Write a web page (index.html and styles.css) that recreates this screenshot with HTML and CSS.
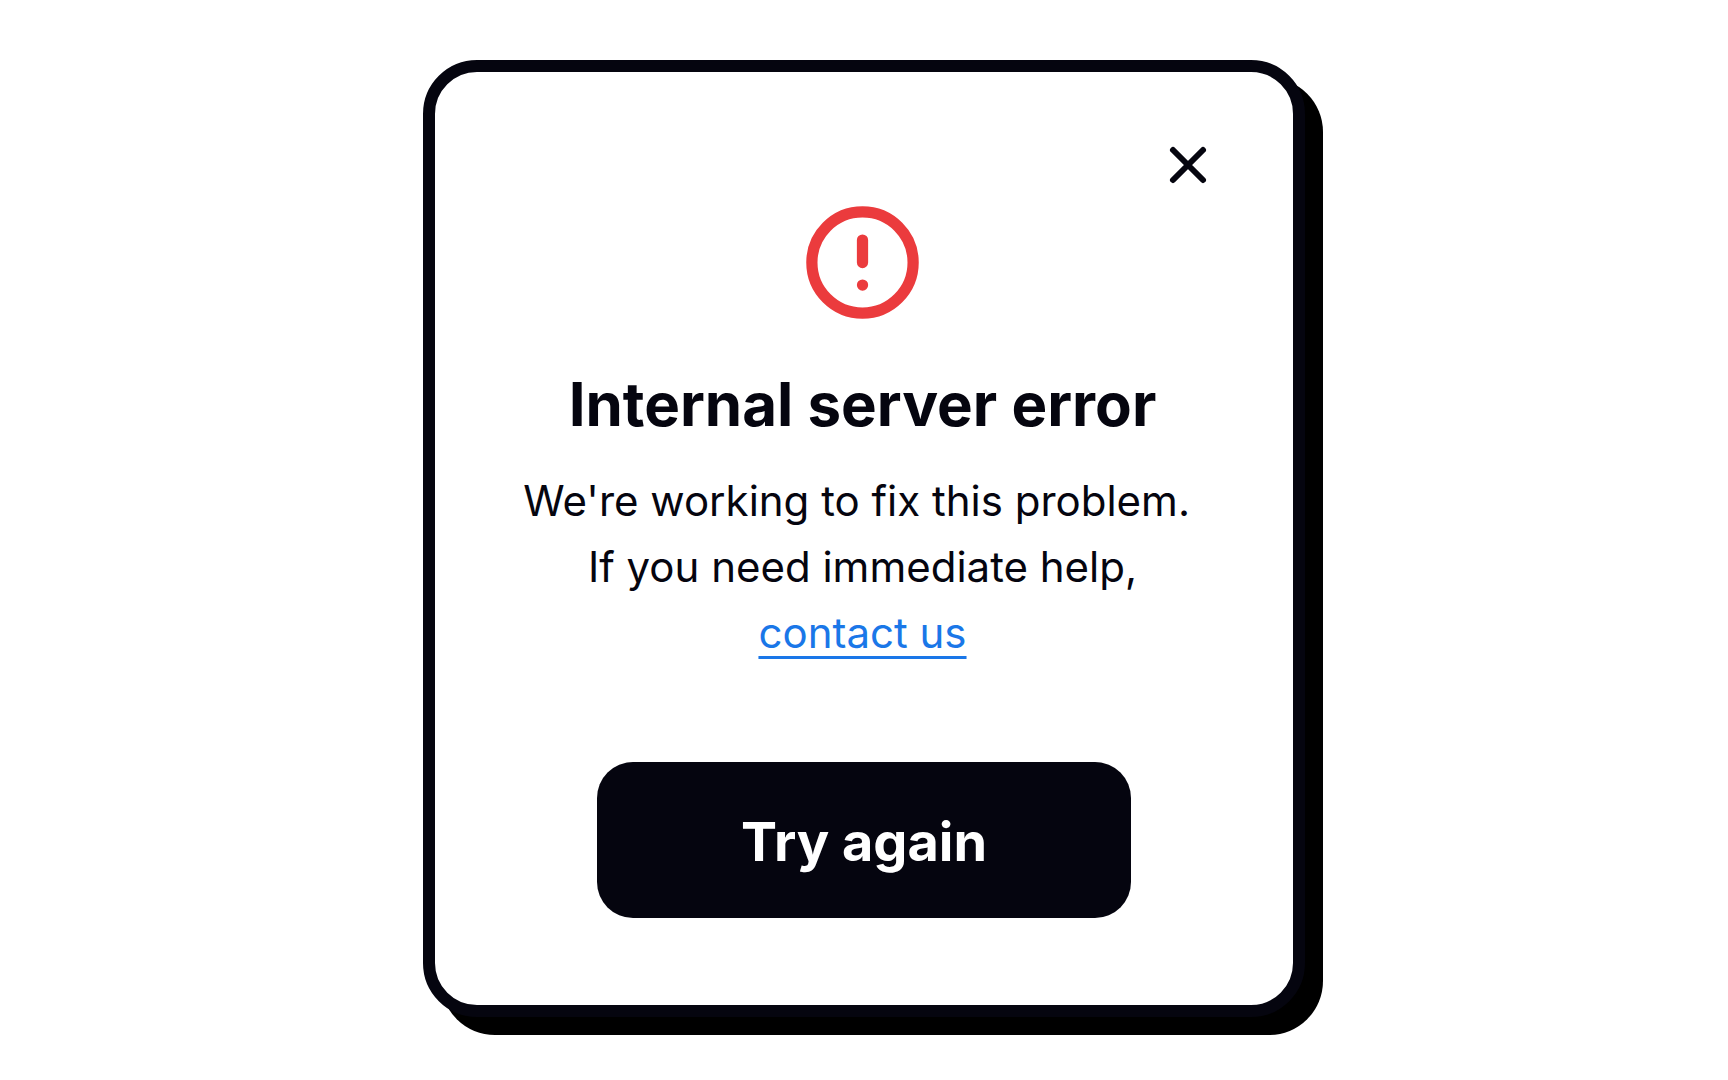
FILE: index.html
```
<!DOCTYPE html>
<html lang="en">
<head>
    <meta charset="UTF-8">
    <meta name="viewport" content="width=device-width, initial-scale=1.0">
    <title>Internal server error</title>
    <link rel="stylesheet" href="styles.css">
</head>
<body>
    <main class="page">
        <section class="modal" role="alertdialog" aria-labelledby="modal-title" aria-describedby="modal-text">
            <button type="button" class="modal-close" aria-label="Close">
                <svg width="60" height="60" viewBox="0 0 60 60" fill="none" stroke="currentColor" stroke-width="6" stroke-linecap="round">
                    <path d="M15 15l30 30M45 15L15 45"/>
                </svg>
            </button>

            <div class="modal-content">
                <svg class="modal-icon" width="135" height="135" viewBox="0 0 24 24" fill="none" stroke="currentColor" stroke-width="2" stroke-linecap="round" aria-hidden="true">
                    <circle cx="12" cy="12" r="9"/>
                    <path d="M12 8v4M12 16h.01"/>
                </svg>
                <h1 class="modal-title" id="modal-title">Internal server error</h1>
                <p class="modal-text" id="modal-text">
                    We're working to fix this problem.&nbsp;<br>
                    If you need immediate help,<br>
                    <a href="#contact" class="modal-link">contact us</a>
                </p>
            </div>

            <button type="button" class="retry-btn">Try again</button>
        </section>
    </main>
</body>
</html>
```

FILE: styles.css
```
* {
    margin: 0;
    padding: 0;
    box-sizing: border-box;
}

body {
    font-family: Inter, 'Liberation Sans', sans-serif;
    background-color: #fff;
    color: #05050f;
}

.page {
    display: flex;
    justify-content: center;
    padding: 60px 24px 45px;
}

.modal {
    display: flex;
    flex-direction: column;
    align-items: center;
    width: 100%;
    max-width: 882px;
    padding: 63px 75px 87px;
    background-color: #fff;
    border: 12px solid #05050f;
    border-radius: 54px;
    box-shadow: 18px 18px 0 #000;
}

.modal-close {
    align-self: flex-end;
    display: flex;
    background: none;
    border: none;
    color: inherit;
    cursor: pointer;
}

.modal-content {
    display: flex;
    flex-direction: column;
    align-items: center;
    padding-right: 3px;
    text-align: center;
}

.modal-icon {
    color: #eb3b3d;
}

.modal-title {
    margin-top: 36px;
    font-size: 60px;
    font-weight: 700;
    line-height: 76px;
}

.modal-text {
    margin-top: 26px;
    font-size: 42px;
    font-weight: 400;
    line-height: 66px;
}

.modal-link {
    color: #1a77e8;
    text-decoration: underline;
    text-decoration-thickness: 3px;
    text-underline-offset: 8px;
    text-decoration-skip-ink: none;
}

.retry-btn {
    width: 100%;
    max-width: 534px;
    margin-top: 96px;
    padding: 47px 24px 43px;
    background-color: #05050f;
    border: none;
    border-radius: 36px;
    color: #fff;
    font-family: inherit;
    font-size: 54px;
    font-weight: 700;
    line-height: 66px;
    cursor: pointer;
}
```
